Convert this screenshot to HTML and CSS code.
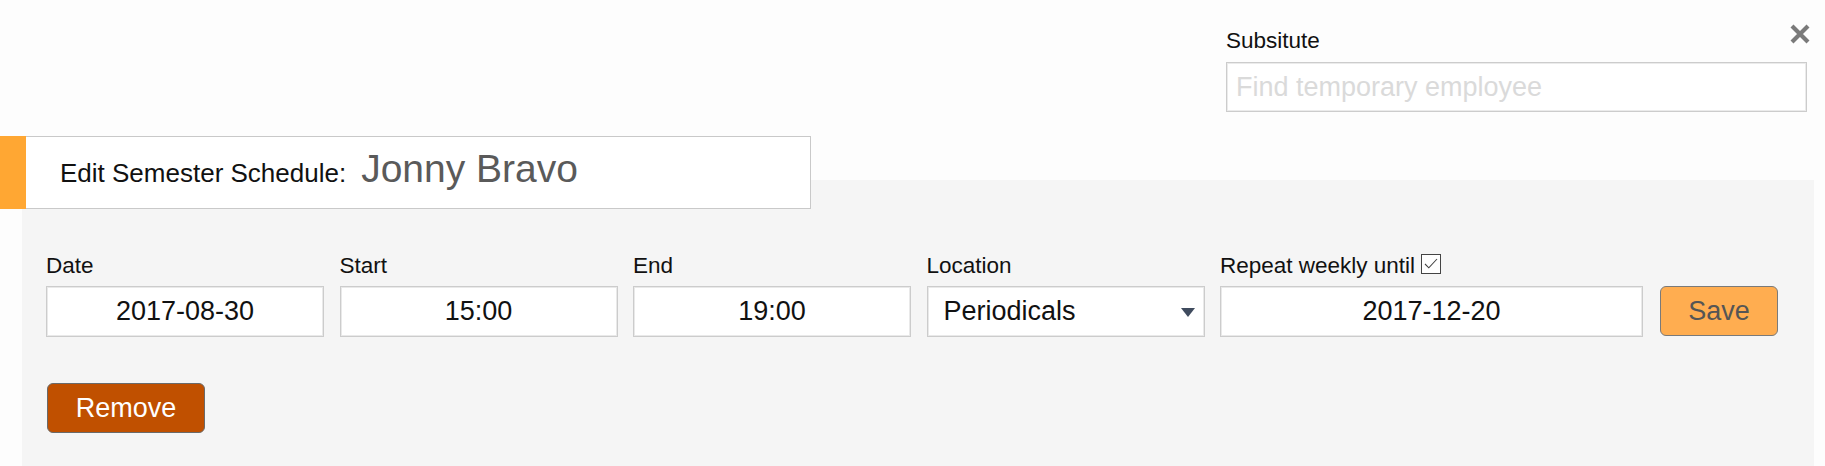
FILE: index.html
```html
<!DOCTYPE html>
<html lang="en">
<head>
<meta charset="utf-8">
<title>Edit Semester Schedule</title>
<link rel="stylesheet" href="styles.css">
</head>
<body>
<div class="page">
  <div class="topbar">
    <div class="sub">
      <label class="sub-label" for="sub">Subsitute</label>
      <input id="sub" class="sub-input" type="text" placeholder="Find temporary employee">
    </div>
    <button class="close" aria-label="Close">
      <svg width="22" height="22" viewBox="0 0 22 22"><path d="M3 3 L19 19 M19 3 L3 19" stroke="#7a7a7a" stroke-width="4.2" fill="none"/></svg>
    </button>
  </div>

  <div class="header">
    <div class="accent"></div>
    <div class="title-box">
      <span class="title">Edit Semester Schedule:</span>
      <span class="name">Jonny Bravo</span>
    </div>
  </div>

  <div class="panel">
    <div class="row">
      <div class="field">
        <label class="lbl">Date</label>
        <input class="inp" type="text" value="2017-08-30">
      </div>
      <div class="field">
        <label class="lbl">Start</label>
        <input class="inp" type="text" value="15:00">
      </div>
      <div class="field">
        <label class="lbl">End</label>
        <input class="inp" type="text" value="19:00">
      </div>
      <div class="field">
        <label class="lbl">Location</label>
        <div class="select">
          <span>Periodicals</span>
          <svg class="arrow" width="14" height="9" viewBox="0 0 14 9"><path d="M0 0 H14 L7 9 Z" fill="#3f4b5e"/></svg>
        </div>
      </div>
      <div class="field wide">
        <label class="lbl">Repeat weekly until <svg class="check" width="20" height="20" viewBox="0 0 20 20"><rect x="0.5" y="0.5" width="19" height="19" fill="#fff" stroke="#444"/><path d="M4 10 L7.8 13.8 L16 5" stroke="#444" stroke-width="1.1" fill="none"/></svg></label>
        <input class="inp" type="text" value="2017-12-20">
      </div>
      <button class="save">Save</button>
    </div>
    <button class="remove">Remove</button>
  </div>
</div>
</body>
</html>
```

FILE: styles.css
```css
html, body {
  margin: 0;
  padding: 0;
  background: #fdfdfd;
}

body {
  font-family: "Liberation Sans", Arial, sans-serif;
  color: #111;
  overflow: hidden;
}

.page {
  width: 1825px;
}

.topbar {
  position: relative;
  display: flex;
  justify-content: flex-end;
  padding: 28px 18px 0 0;
}

.sub {
  width: 581px;
  display: flex;
  flex-direction: column;
}

.sub-label {
  font-size: 22.5px;
  line-height: 26px;
  margin-bottom: 8px;
  color: #111;
}

.sub-input {
  box-sizing: border-box;
  width: 581px;
  height: 50px;
  margin: 0;
  padding: 0 0 0 9px;
  font-family: "Liberation Sans", Arial, sans-serif;
  font-size: 27px;
  color: #111;
  background: #fff;
  border: 1px solid #cccccc;
  box-shadow: inset 0 0 0 1px #ebebeb;
  outline: none;
}

.sub-input::placeholder {
  color: #dadada;
}

.close {
  position: absolute;
  top: 23px;
  right: 14px;
  width: 22px;
  height: 22px;
  padding: 0;
  margin: 0;
  border: 0;
  background: transparent;
  display: block;
}

.close svg {
  display: block;
}

.header {
  position: relative;
  z-index: 1;
  display: flex;
  width: 811px;
  height: 73px;
  margin-top: 24px;
  margin-bottom: -29px;
}

.accent {
  width: 26px;
  background: #ffa733;
}

.title-box {
  box-sizing: border-box;
  flex: 1;
  display: flex;
  align-items: baseline;
  padding: 10px 0 0 34px;
  background: #fff;
  border: 1px solid #c9c9c9;
  border-left: 0;
}

.title {
  font-size: 26px;
  line-height: 44px;
  color: #111;
}

.name {
  font-size: 39px;
  line-height: 44px;
  color: #5a5a5a;
  margin-left: 15px;
}

.panel {
  box-sizing: border-box;
  width: 1792px;
  margin-left: 22px;
  height: 286px;
  padding: 73px 0 0 24px;
  background: #f5f5f5;
}

.row {
  display: flex;
  align-items: flex-end;
  gap: 15.5px;
}

.field {
  display: flex;
  flex-direction: column;
  width: 278px;
}

.field.wide {
  width: 423px;
}

.lbl {
  font-size: 22.5px;
  line-height: 26px;
  margin-bottom: 7px;
  color: #111;
  white-space: nowrap;
}

.check {
  display: inline-block;
  vertical-align: -1px;
}

.inp {
  box-sizing: border-box;
  width: 100%;
  height: 51px;
  margin: 0;
  padding: 0;
  text-align: center;
  font-family: "Liberation Sans", Arial, sans-serif;
  font-size: 27px;
  color: #111;
  background: #fff;
  border: 1px solid #cccccc;
  box-shadow: inset 0 0 0 1px #e9e9e9;
  outline: none;
}

.select {
  box-sizing: border-box;
  width: 100%;
  height: 51px;
  display: flex;
  align-items: center;
  justify-content: space-between;
  padding: 0 9px 0 16px;
  font-size: 27px;
  color: #111;
  background: #fff;
  border: 1px solid #cccccc;
  box-shadow: inset 0 0 0 1px #e9e9e9;
}

.arrow {
  display: block;
  margin-top: 1px;
}

.save {
  box-sizing: border-box;
  width: 118px;
  height: 50px;
  margin: 0 0 1px 1.5px;
  padding: 0;
  font-family: "Liberation Sans", Arial, sans-serif;
  font-size: 27px;
  color: #555;
  background: #ffad50;
  border: 1px solid #7a7a7a;
  border-radius: 6px;
}

.remove {
  display: block;
  box-sizing: border-box;
  width: 158px;
  height: 50px;
  margin: 46px 0 0 1px;
  padding: 0;
  font-family: "Liberation Sans", Arial, sans-serif;
  font-size: 27px;
  color: #fff;
  background: #c05000;
  border: 1px solid #6a6a6a;
  border-radius: 6px;
}
```
